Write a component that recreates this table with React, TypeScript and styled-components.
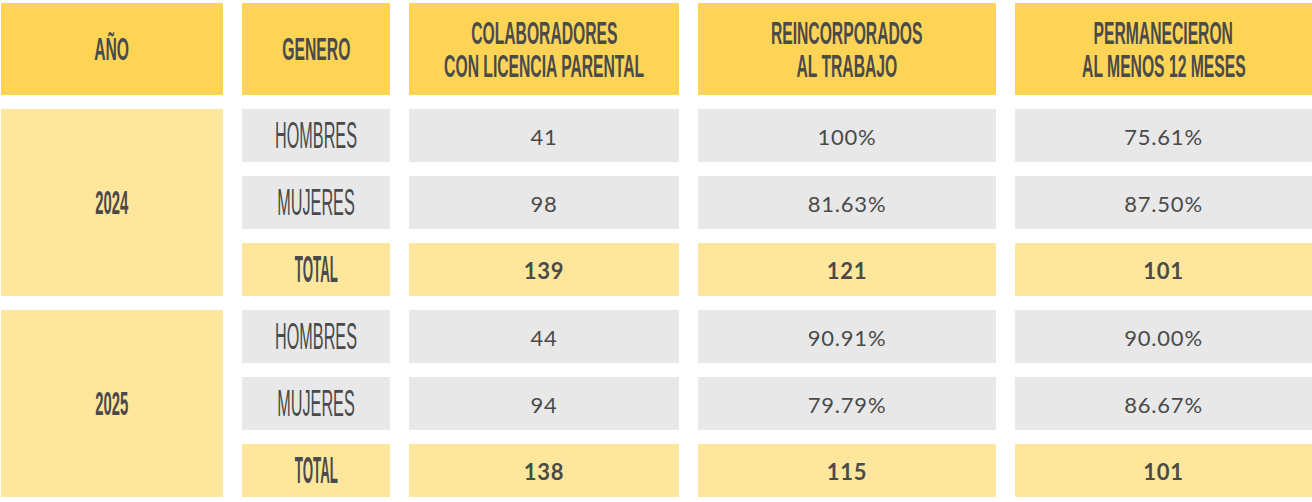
import React from "react";
import styled, { createGlobalStyle } from "styled-components";

type Row = {
  genero: string;
  colaboradores: string;
  reincorporados: string;
  permanecieron: string;
  total?: boolean;
};

type Group = {
  year: string;
  rows: Row[];
};

const groups: Group[] = [
  {
    year: "2024",
    rows: [
      { genero: "HOMBRES", colaboradores: "41", reincorporados: "100%", permanecieron: "75.61%" },
      { genero: "MUJERES", colaboradores: "98", reincorporados: "81.63%", permanecieron: "87.50%" },
      { genero: "TOTAL", colaboradores: "139", reincorporados: "121", permanecieron: "101", total: true }
    ]
  },
  {
    year: "2025",
    rows: [
      { genero: "HOMBRES", colaboradores: "44", reincorporados: "90.91%", permanecieron: "90.00%" },
      { genero: "MUJERES", colaboradores: "94", reincorporados: "79.79%", permanecieron: "86.67%" },
      { genero: "TOTAL", colaboradores: "138", reincorporados: "115", permanecieron: "101", total: true }
    ]
  }
];

const GlobalStyle = createGlobalStyle`
  html, body {
    margin: 0;
    padding: 0;
    background: #ffffff;
  }
`;

const Table = styled.div`
  display: grid;
  grid-template-columns: 222px 148px 270px 298px 297px;
  grid-template-rows: 92px repeat(6, 53px);
  column-gap: 19px;
  row-gap: 14px;
  padding: 3px 0 0 1px;
  width: 1312px;
  box-sizing: border-box;
`;

const Cell = styled.div<{ $tone: "head" | "light" | "grey" }>`
  display: flex;
  align-items: center;
  justify-content: center;
  overflow: visible;
  background: ${(p) =>
    p.$tone === "head" ? "#fed457" : p.$tone === "light" ? "#fee69c" : "#e8e8e8"};
  color: #4a4a4a;
`;

const YearCell = styled(Cell)`
  grid-row: span 3;
`;

/* condensed display type, squeezed from Liberation Sans */
const Condensed = styled.span<{ $size: number; $scale: number; $weight: number }>`
  display: inline-block;
  font-family: "Liberation Sans", Arial, sans-serif;
  font-size: ${(p) => p.$size}px;
  font-weight: ${(p) => p.$weight};
  line-height: 33px;
  white-space: nowrap;
  text-align: center;
  transform: scaleX(${(p) => p.$scale});
  transform-origin: center;
`;

const HeadLines = styled.div`
  display: flex;
  flex-direction: column;
  align-items: center;
  margin-top: 1px;
`;

const Number = styled.span<{ $bold?: boolean }>`
  font-family: Lato, "Open Sans", sans-serif;
  font-size: 22px;
  font-weight: ${(p) => (p.$bold ? 700 : 400)};
  letter-spacing: 0.8px;
  color: #4a4a4a;
  margin-top: 1px;
`;

const Header: React.FC<{ lines: string[] }> = ({ lines }) => (
  <Cell $tone="head">
    <HeadLines>
      {lines.map((l) => (
        <Condensed key={l} $size={32} $scale={0.49} $weight={700}>
          {l}
        </Condensed>
      ))}
    </HeadLines>
  </Cell>
);

const App: React.FC = () => {
  return (
    <>
      <GlobalStyle />
      <Table>
        <Header lines={["AÑO"]} />
        <Header lines={["GENERO"]} />
        <Header lines={["COLABORADORES", "CON LICENCIA PARENTAL"]} />
        <Header lines={["REINCORPORADOS", "AL TRABAJO"]} />
        <Header lines={["PERMANECIERON", "AL MENOS 12 MESES"]} />
        {groups.map((g) =>
          g.rows.map((r, i) => {
            const tone = r.total ? "light" : "grey";
            return (
              <React.Fragment key={g.year + r.genero}>
                {i === 0 && (
                  <YearCell $tone="light">
                    <Condensed $size={33} $scale={0.45} $weight={700}>
                      {g.year}
                    </Condensed>
                  </YearCell>
                )}
                <Cell $tone={tone}>
                  <Condensed
                    $size={36}
                    $scale={r.total ? 0.37 : 0.45}
                    $weight={r.total ? 700 : 400}
                  >
                    {r.genero}
                  </Condensed>
                </Cell>
                <Cell $tone={tone}>
                  <Number $bold={r.total}>{r.colaboradores}</Number>
                </Cell>
                <Cell $tone={tone}>
                  <Number $bold={r.total}>{r.reincorporados}</Number>
                </Cell>
                <Cell $tone={tone}>
                  <Number $bold={r.total}>{r.permanecieron}</Number>
                </Cell>
              </React.Fragment>
            );
          })
        )}
      </Table>
    </>
  );
};

export default App;
